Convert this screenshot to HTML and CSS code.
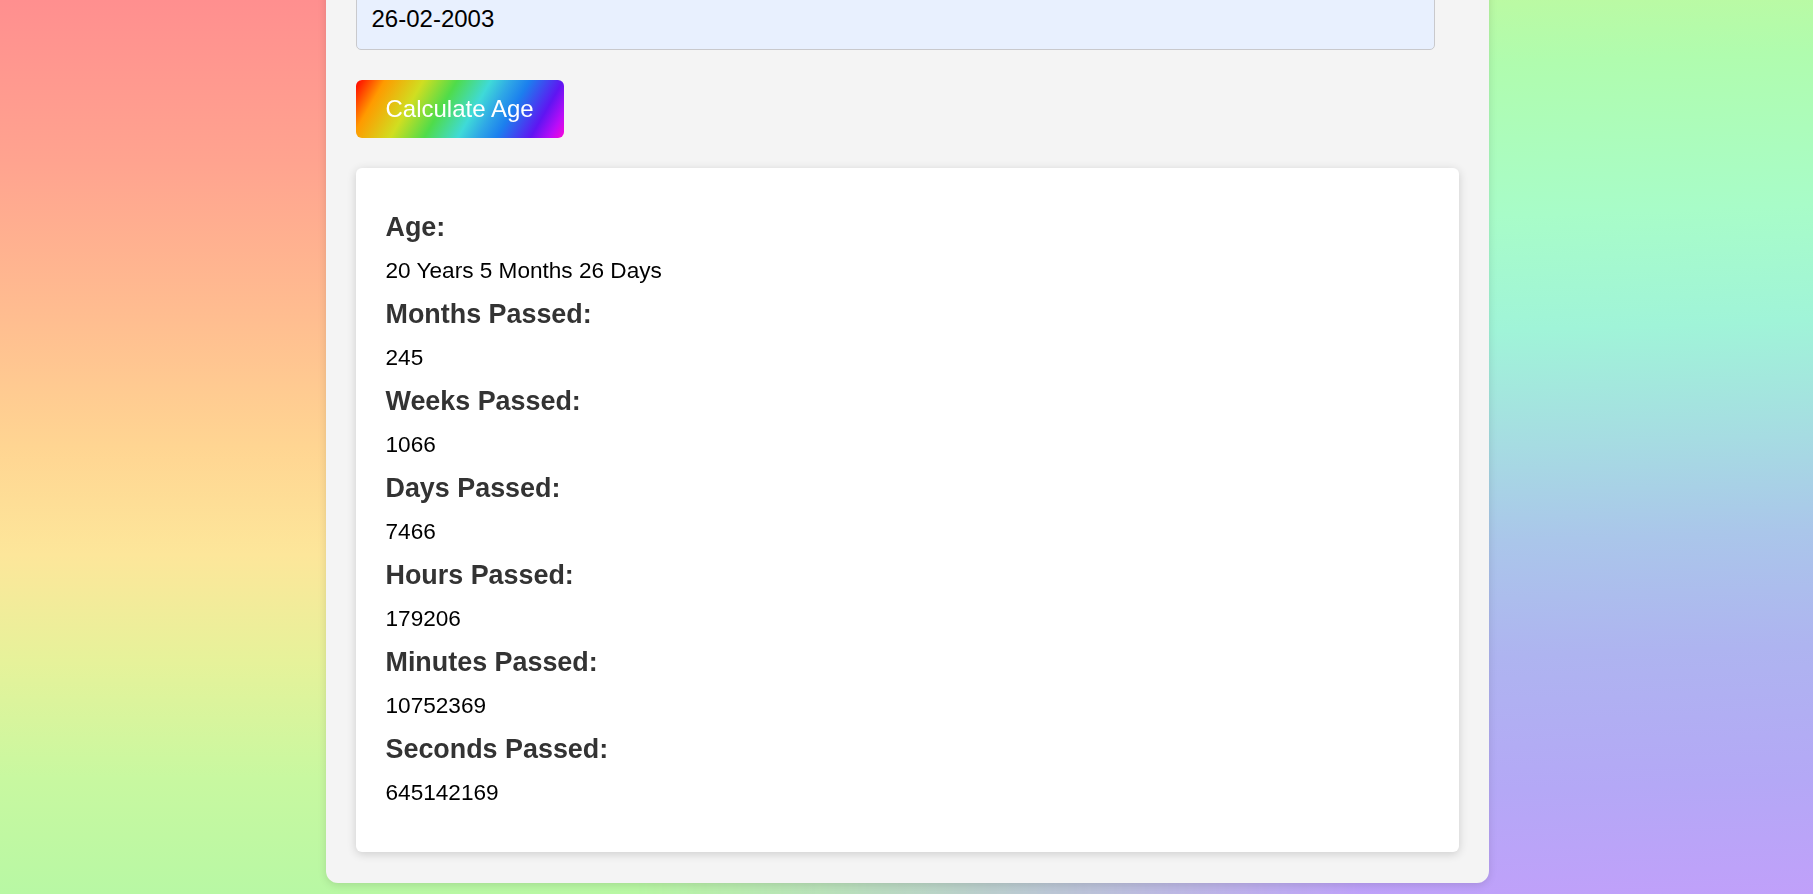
FILE: index.html
```html
<!DOCTYPE html>
<html lang="en">
<head>
<meta charset="utf-8">
<title>Age Calculator</title>
<link rel="stylesheet" href="styles.css">
</head>
<body>
<div class="page">
  <main class="container">
    <input class="date-input" type="text" value="26-02-2003">
    <button class="calc-btn" type="button">Calculate Age</button>
    <section class="result">
      <h3 class="label">Age:</h3>
      <p class="value">20 Years 5 Months 26 Days</p>
      <h3 class="label">Months Passed:</h3>
      <p class="value">245</p>
      <h3 class="label">Weeks Passed:</h3>
      <p class="value">1066</p>
      <h3 class="label">Days Passed:</h3>
      <p class="value">7466</p>
      <h3 class="label">Hours Passed:</h3>
      <p class="value">179206</p>
      <h3 class="label">Minutes Passed:</h3>
      <p class="value">10752369</p>
      <h3 class="label">Seconds Passed:</h3>
      <p class="value">645142169</p>
    </section>
  </main>
</div>
</body>
</html>
```

FILE: styles.css
```css
html, body {
  margin: 0;
  padding: 0;
  height: 100%;
  overflow: hidden;
}

body {
  position: relative;
  font-family: "Liberation Sans", Arial, sans-serif;
  background: linear-gradient(180deg,
    #ff8f8f 0%,
    #ffa38f 18%,
    #ffbe90 36%,
    #ffd592 50%,
    #fde69a 62%,
    #e6f29a 74%,
    #c8f8a0 87%,
    #b8f8a4 100%);
}

body::before {
  content: "";
  position: fixed;
  inset: 0;
  z-index: 0;
  background: linear-gradient(178deg,
    #c4f89a 0%,
    #b0fcae 12%,
    #a8fcc8 28%,
    #a0f4d8 40%,
    #a6dce2 52%,
    #aac6ea 62%,
    #aeb4f0 74%,
    #b4a8f6 88%,
    #c0a0fa 100%);
  -webkit-mask-image: linear-gradient(to right, transparent 35%, #000 75%);
  mask-image: linear-gradient(to right, transparent 35%, #000 75%);
}

.page {
  position: relative;
  z-index: 1;
  display: flex;
  justify-content: center;
  padding-left: 1px;
}

.container {
  width: 1163px;
  box-sizing: border-box;
  margin-top: -42px;
  padding: 30px 30px 31px;
  background: #f4f4f4;
  border-radius: 12px;
  box-shadow: 0 2px 8px rgba(0, 0, 0, 0.12);
  display: flex;
  flex-direction: column;
  align-items: flex-start;
}

.date-input {
  width: calc(100% - 24px);
  box-sizing: border-box;
  height: 62px;
  padding: 0 15px;
  border: 1px solid #c9c9cc;
  border-radius: 5px;
  background: #e8f0fe;
  color: #000;
  font-family: "Liberation Sans", Arial, sans-serif;
  font-size: 24px;
  outline: none;
}

.calc-btn {
  margin-top: 30px;
  height: 58px;
  padding: 0 30px;
  border: none;
  border-radius: 6px;
  color: #fff;
  font-family: "Liberation Sans", Arial, sans-serif;
  font-size: 24px;
  background: linear-gradient(120deg,
    #ff0000 0%,
    #ff9a00 12%,
    #d0de21 28%,
    #4fdc4a 42%,
    #3fdad8 56%,
    #2fa8e6 64%,
    #1c7fee 72%,
    #5f15f2 86%,
    #ba0cf8 94%,
    #fb07d9 100%);
  cursor: pointer;
}

.result {
  align-self: stretch;
  margin-top: 30px;
  padding: 44px 30px 31px;
  background: #fff;
  border-radius: 6px;
  box-shadow: 0 2px 10px rgba(0, 0, 0, 0.16);
}

.label {
  margin: 0 0 15.3px;
  font-size: 26.9px;
  line-height: 31px;
  font-weight: bold;
  color: #333;
}

.value {
  margin: 0 0 14.7px;
  font-size: 22.6px;
  line-height: 26px;
  color: #000;
}
```
